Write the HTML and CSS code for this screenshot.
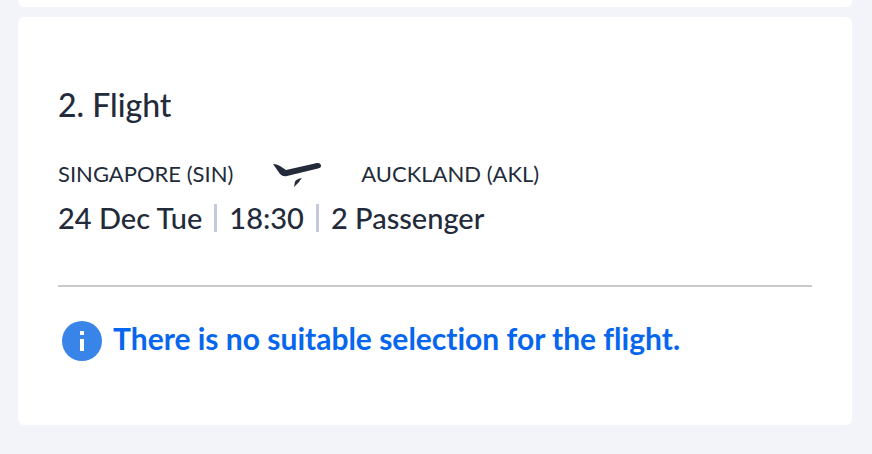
FILE: index.html
```html
<!DOCTYPE html>
<html lang="en">
<head>
<meta charset="utf-8">
<meta name="viewport" content="width=device-width, initial-scale=1">
<title>Flight</title>
<link rel="stylesheet" href="styles.css">
</head>
<body>
<main class="page">
  <div class="card card-previous"></div>
  <section class="card flight">
    <h2 class="title">2. Flight</h2>
    <div class="route">
      <span>SINGAPORE (SIN)</span>
      <svg class="plane" viewBox="0 0 48 28" aria-hidden="true"><path d="M0 4 Q4 4 7 6 L13 10 L44 3 Q47 2.500 48 5 Q48.500 7.500 45 8.500 L14 16 Q10 17 7 14Z M21 27 L22 21.500 Q24 18.500 29 18 Q27 20 26 22Z"/></svg>
      <span>AUCKLAND (AKL)</span>
    </div>
    <div class="details">
      <span>24 Dec Tue</span>
      <span class="detail">18:30</span>
      <span class="detail">2 Passenger</span>
    </div>
    <hr class="divider">
    <p class="notice">
      <svg class="info" viewBox="0 0 40 40" aria-hidden="true"><circle cx="20" cy="20" r="20"/><path d="M18 10h4v4h-4zM18 18h4v12h-4z"/></svg>
      <span>There is no suitable selection for the flight.</span>
    </p>
  </section>
</main>
</body>
</html>
```
FILE: styles.css
```css
* { box-sizing: border-box; }
body { margin: 0; background: #f3f4f9; color: #232b3a; font-family: Lato, sans-serif; font-weight: 500; font-variant-ligatures: none; }
.page { display: flex; flex-direction: column; gap: 10px; padding: 0 20px 28px 18px; }
.card { background: #fff; border-radius: 6px; }
.card-previous { height: 7px; border-radius: 0 0 6px 6px; }
.flight { padding: 68px 40px 64px; }
.title { margin: 0 0 33px; font-size: 32px; line-height: 40px; font-weight: 500; }
.route { display: flex; align-items: center; gap: 40px; font-size: 22px; line-height: 32px; font-weight: 400; }
.plane { width: 48px; height: 28px; fill: #232b3a; }
.details { display: flex; align-items: center; margin-top: 8px; font-size: 29px; line-height: 40px; }
.detail { display: flex; align-items: center; }
.detail::before { content: ""; width: 3px; height: 28px; margin: 0 12px; background: #c3cbdb; }
.divider { margin: 47px 0 34px; border: 0; border-top: 2px solid #cacaca; }
.notice { display: flex; align-items: flex-start; gap: 11px; margin: 0; padding-left: 4px; color: #0766ee; font-size: 30px; line-height: 34px; font-weight: 700; }
.info { flex: none; width: 40px; height: 40px; fill: #3984e9; }
.info path { fill: #fff; }
```
